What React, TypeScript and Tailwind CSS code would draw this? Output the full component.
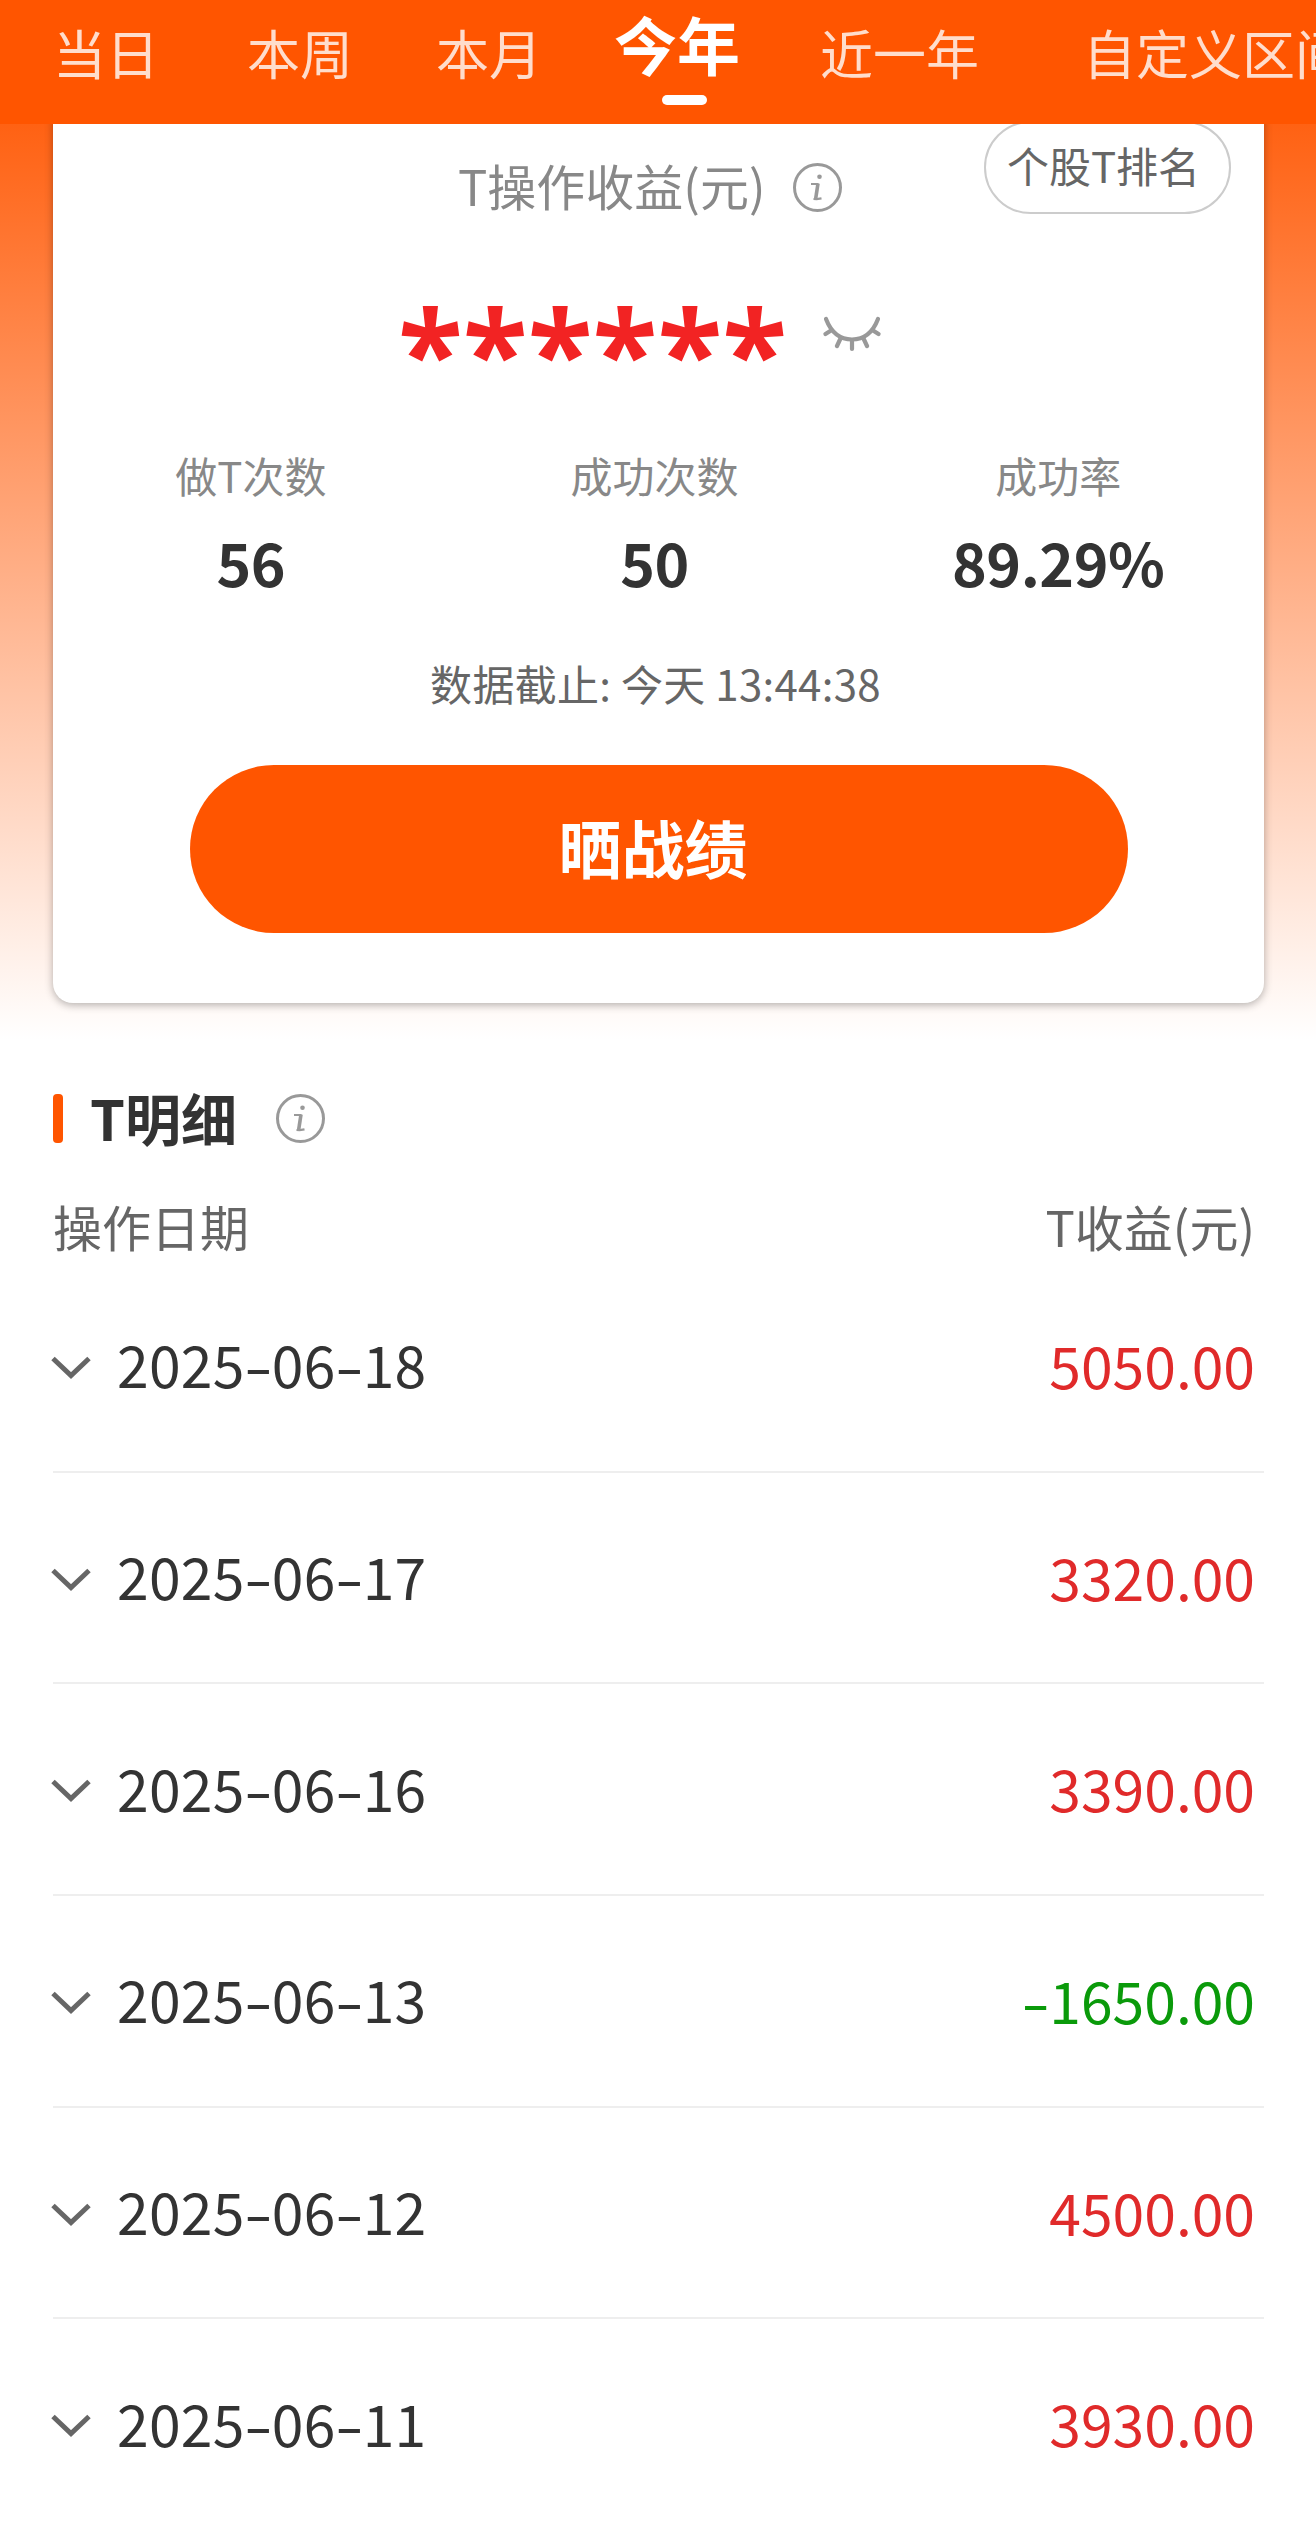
import { Fragment } from "react";

interface Tab {
  label: string;
  active?: boolean;
  className: string;
}

interface Stat {
  label: string;
  value: string;
}

interface TradeDay {
  date: string;
  profit: number;
}

const TABS: Tab[] = [
  { label: "当日", className: "ml-[53px]" },
  { label: "本周", className: "ml-[88px]" },
  { label: "本月", className: "ml-[83px]" },
  { label: "今年", active: true, className: "ml-[72px]" },
  { label: "近一年", className: "ml-[80px]" },
  { label: "自定义区间", className: "ml-[104px]" },
];

const STATS: Stat[] = [
  { label: "做T次数", value: "56" },
  { label: "成功次数", value: "50" },
  { label: "成功率", value: "89.29%" },
];

const DAYS: TradeDay[] = [
  { date: "2025-06-18", profit: 5050 },
  { date: "2025-06-17", profit: 3320 },
  { date: "2025-06-16", profit: 3390 },
  { date: "2025-06-13", profit: -1650 },
  { date: "2025-06-12", profit: 4500 },
  { date: "2025-06-11", profit: 3930 },
];

function InfoIcon() {
  return (
    <svg
      className="size-[49px] shrink-0 text-[#999]"
      viewBox="0 0 49 49"
      fill="none"
      stroke="currentColor"
    >
      <circle cx="24.5" cy="24.5" r="23" strokeWidth="3" />
      <circle cx="26.5" cy="13.800" r="2.3" fill="currentColor" stroke="none" />
      <path d="M18 21h7.5" strokeWidth="2" />
      <path d="M25 20.500l-2.300 15" strokeWidth="3.6" />
      <path d="M20.500 36l3 .2 5-.8" strokeWidth="2.2" />
    </svg>
  );
}

function ClosedEyeIcon() {
  return (
    <svg
      className="h-[36px] w-[58px] shrink-0 text-[#999]"
      viewBox="0 0 58 36"
      fill="none"
      stroke="currentColor"
      strokeWidth="4.2"
      strokeLinecap="round"
    >
      <path d="M3 3C8 16 17 23.500 29 23.500S50 16 55 3" />
      <path d="M8 14.500l-5.500 3.500M50 14.500l5.500 3.500M17.500 22.500L14 30M29 24v9M40.500 22.500L44 30" />
    </svg>
  );
}

function ChevronIcon() {
  return (
    <svg
      className="h-[26px] w-[42px] shrink-0"
      viewBox="0 0 42 26"
      fill="none"
      stroke="#666"
      strokeWidth="5"
    >
      <path d="M3 3.500l18 17 18-17" />
    </svg>
  );
}

function TabBar() {
  return (
    <nav className="relative z-10 flex h-[124px] overflow-hidden bg-[#ff5500] whitespace-nowrap">
      {TABS.map((tab) =>
        tab.active ? (
          <div
            key={tab.label}
            className={`${tab.className} flex shrink-0 flex-col items-center text-[63px] leading-[86px] font-bold text-white`}
          >
            {tab.label}
            <span className="mt-[9px] ml-[14px] h-[10px] w-[45px] rounded-full bg-white" />
          </div>
        ) : (
          <div
            key={tab.label}
            className={`${tab.className} shrink-0 text-[53px] leading-[104px] text-[#ffddcc]`}
          >
            {tab.label}
          </div>
        ),
      )}
    </nav>
  );
}

function SummaryCard() {
  return (
    <section className="relative mr-[52px] -mt-[22px] ml-[53px] h-[901px] rounded-[20px] bg-white shadow-[0_2px_8px_rgba(0,0,0,0.3)]">
      <div className="absolute top-[19px] right-[33px] flex h-[93px] w-[247px] items-center justify-center rounded-full border-2 border-[#ccc] pb-[6px] text-[42px] text-[#666]">
        <span className="-ml-[8px]">个股T排名</span>
      </div>

      <div className="flex h-[110px] items-end gap-[30px] pl-[405px] text-[49px] leading-[49px] text-[#888]">
        <span className="w-[305px] pb-[3px] whitespace-nowrap">T操作收益(元)</span>
        <InfoIcon />
      </div>

      <div className="mt-[66px] flex h-[112px] items-center pl-[345px]">
        <span className="w-[425px] pt-[32px] font-['Open_Sans'] text-[119px] leading-[112px] font-bold text-[#f22323]">
          ******
        </span>
        <ClosedEyeIcon />
      </div>

      <div className="mt-[55px] mr-[4px] -ml-[4px] grid grid-cols-3 text-center">
        {STATS.map((stat) => (
          <div key={stat.label}>
            <div className="text-[42px] leading-[60px] text-[#888]">{stat.label}</div>
            <div className="mt-[22px] text-[59px] leading-[70px] font-bold tracking-[-0.5px] text-[#333]">
              {stat.value}
            </div>
          </div>
        ))}
      </div>

      <p className="mt-[56px] mr-[6px] text-center text-[42px] leading-[60px] tracking-[0.3px] text-[#666]">
        数据截止: 今天 13:44:38
      </p>

      <button className="mt-[52px] ml-[137px] h-[168px] w-[938px] rounded-full bg-[#ff5500] pr-[12px] pb-[5px] text-[63px] font-bold text-white">
        晒战绩
      </button>
    </section>
  );
}

// Hyphen stretched to sit evenly between digits
function Dash() {
  return <span className="inline-block w-[27px] scale-x-145 text-center">-</span>;
}

function DateText({ value }: { value: string }) {
  return (
    <span className="text-[57px] leading-none tracking-[0.3px] text-[#333]">
      {value.split("-").map((part, i) => (
        <Fragment key={i}>
          {i > 0 && <Dash />}
          {part}
        </Fragment>
      ))}
    </span>
  );
}

function DayRow({ day }: { day: TradeDay }) {
  const loss = day.profit < 0;

  return (
    <li className="flex h-[211.700px] items-center border-b-2 border-[#eee] pr-[9px] pb-[3px]">
      <span className="mt-[7px] -ml-[3px]">
        <ChevronIcon />
      </span>
      <span className="ml-[25px] flex-1">
        <DateText value={day.date} />
      </span>
      <span className={`text-[57px] leading-none ${loss ? "text-[#0a9a0a]" : "text-[#e02a2a]"}`}>
        {loss && <Dash />}
        {Math.abs(day.profit).toFixed(2)}
      </span>
    </li>
  );
}

export default function App() {
  return (
    <div className="h-[2524px] w-[1316px] overflow-hidden bg-white bg-[linear-gradient(#ff5500_50px,#fff_1040px)] font-['Noto_Sans_CJK_SC',sans-serif]">
      <TabBar />
      <SummaryCard />

      <section className="pt-[91px] pr-[52px] pl-[53px]">
        <div className="flex h-[49px] items-center">
          <span className="h-[49px] w-[10px] rounded-[4px] bg-[#ff5500]" />
          <h2 className="ml-[27px] w-[186px] pb-[5px] text-[56px] leading-[49px] font-bold text-[#333]">
            T明细
          </h2>
          <InfoIcon />
        </div>

        <div className="mt-[53px] flex h-[60px] items-center justify-between pr-[9px] text-[49px] text-[#666]">
          <span>操作日期</span>
          <span>T收益(元)</span>
        </div>

        <ul className="mt-[5px]">
          {DAYS.map((day) => (
            <DayRow key={day.date} day={day} />
          ))}
        </ul>
      </section>
    </div>
  );
}
